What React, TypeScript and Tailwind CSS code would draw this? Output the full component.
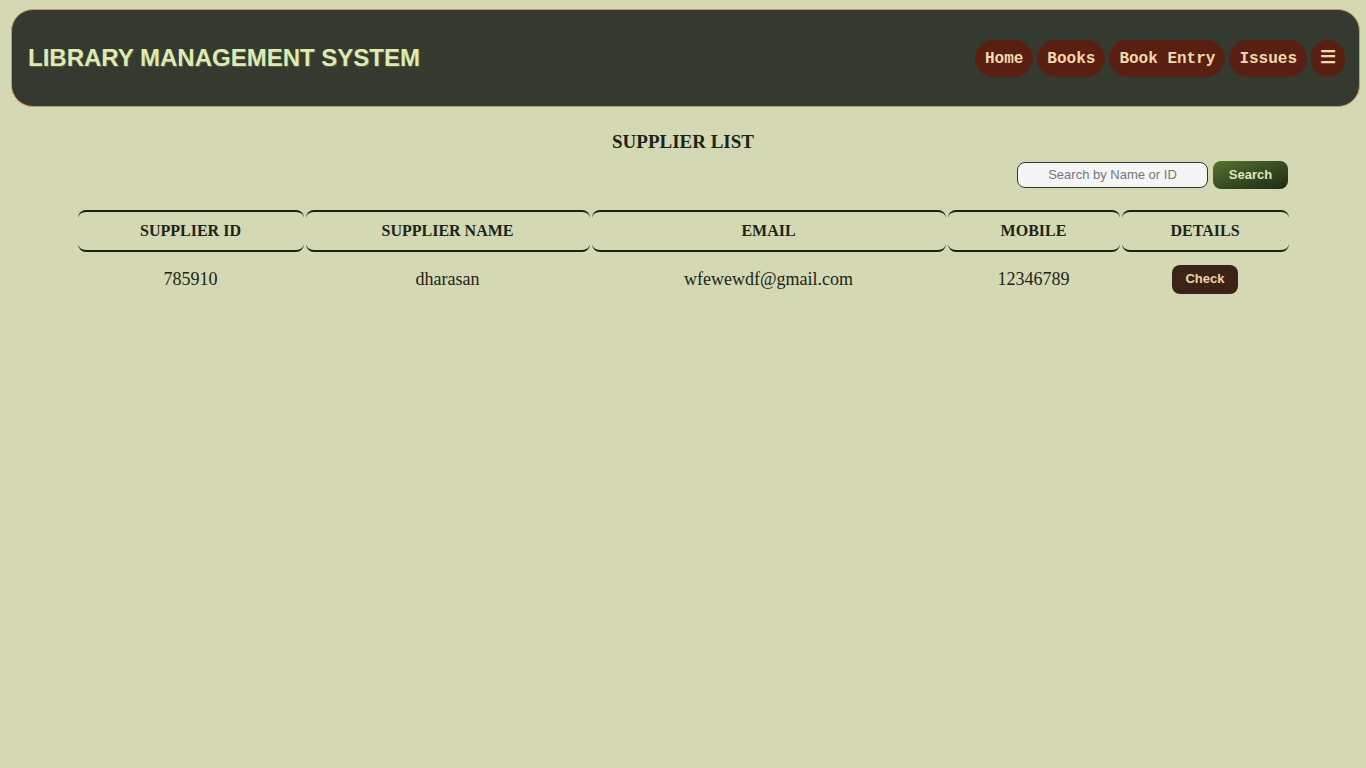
import React from "react";

const navItems = ["Home", "Books", "Book Entry", "Issues"];

const suppliers = [
  { id: "785910", name: "dharasan", email: "wfewewdf@gmail.com", mobile: "12346789" },
];

const headers = [
  { label: "SUPPLIER ID", w: "w-[226px]" },
  { label: "SUPPLIER NAME", w: "w-[284px]" },
  { label: "EMAIL", w: "w-[354px]" },
  { label: "MOBILE", w: "w-[172px]" },
  { label: "DETAILS", w: "w-[167px]" },
];

export default function App() {
  return (
    <div className="min-h-screen bg-[#d4d9b4] pt-[9px] font-['Liberation_Serif',serif]">
      {/* Navbar */}
      <header className="ml-[11px] mr-[6px] flex items-center justify-between h-[98px] rounded-[22px] border border-[#c9985e] bg-[#343a30] pl-[16px] pr-[14px]">
        <h1 className="font-['Liberation_Sans',Arial,sans-serif] text-[24px] font-bold text-[#dcebb4] [text-shadow:1px_1px_1px_#6b5a3a]">
          LIBRARY MANAGEMENT SYSTEM
        </h1>
        <nav className="flex items-center gap-[4px] font-['Liberation_Mono','Courier_New',monospace]">
          {navItems.map((item) => (
            <button
              key={item}
              className="h-[37px] rounded-full bg-[#5a1f13] px-[10px] pt-[2px] text-[16px] font-bold text-[#f3d9ab]"
            >
              {item}
            </button>
          ))}
          <button className="h-[37px] w-[34px] rounded-full bg-[#5a1f13] text-[18px] font-bold text-[#f3d9ab]">
            ☰
          </button>
        </nav>
      </header>

      {/* Supplier list */}
      <main className="flex flex-col items-center">
        <h2 className="mt-[21px] text-[19px] font-bold text-[#1c2414]">SUPPLIER LIST</h2>

        <div className="w-[1212px] flex justify-end gap-[5px] mt-[5px] pr-[1px]">
          <input
            type="text"
            placeholder="Search by Name or ID"
            className="h-[26px] w-[191px] rounded-[8px] border border-[#333] bg-[#f5f5f5] text-center text-[13px] font-['Liberation_Sans',Arial,sans-serif] placeholder:text-[#777] outline-none"
          />
          <button className="h-[28px] w-[75px] -mt-[1px] rounded-[8px] bg-gradient-to-br from-[#56732e] to-[#1f2a16] text-[13px] font-bold text-[#dfe6bf] font-['Liberation_Sans',Arial,sans-serif]">
            Search
          </button>
        </div>

        <table className="mt-[21px] border-separate border-spacing-x-[2px] border-spacing-y-0 text-[#1c2414]">
          <thead>
            <tr>
              {headers.map((h) => (
                <th
                  key={h.label}
                  className={`${h.w} h-[42px] rounded-[8px] border-y-2 border-[#1a2212] text-[16px] font-bold`}
                >
                  {h.label}
                </th>
              ))}
            </tr>
          </thead>
          <tbody>
            {suppliers.map((s) => (
              <tr key={s.id} className="text-[18px]">
                <td className="h-[55px] text-center">{s.id}</td>
                <td className="text-center">{s.name}</td>
                <td className="text-center">{s.email}</td>
                <td className="text-center">{s.mobile}</td>
                <td className="text-center">
                  <button className="h-[29px] w-[66px] rounded-[8px] bg-[#3a2418] text-[13px] font-bold text-[#f4d2a6] font-['Liberation_Sans',Arial,sans-serif]">
                    Check
                  </button>
                </td>
              </tr>
            ))}
          </tbody>
        </table>
      </main>
    </div>
  );
}
